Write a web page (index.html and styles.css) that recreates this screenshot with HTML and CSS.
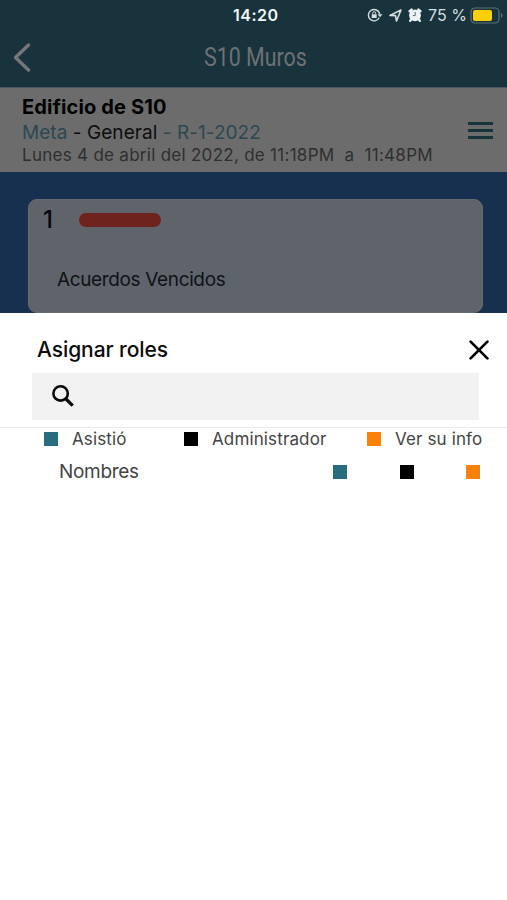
FILE: index.html
```
<!DOCTYPE html>
<html lang="es">
<head>
  <meta charset="utf-8">
  <title>S10 Muros</title>
  <link rel="stylesheet" href="styles.css">
</head>
<body>
  <div class="header">
    <div class="status-bar">
      <span class="clock">14:20</span>
      <div class="status-icons">
        <svg class="lock" width="16" height="14" viewBox="0 0 16 14">
          <path d="M12.2 9.8A5.7 5.7 0 1 1 12.7 6" fill="none" stroke="#d5dee1" stroke-width="1.4"/>
          <path d="M10.6 6.2h4.8L13 9.2z" fill="#d5dee1"/>
          <rect x="4.7" y="6.3" width="5" height="3.8" rx=".5" fill="#d5dee1"/>
          <path d="M5.7 6.5V5.2a1.5 1.5 0 0 1 3 0v1.3" fill="none" stroke="#d5dee1"/>
        </svg>
        <svg class="arrow" width="13" height="13" viewBox="0 0 13 13">
          <path d="M1 6.400L12 1 7.500 12 6.500 6.600z" fill="none" stroke="#d5dee1" stroke-width="1.600" stroke-linejoin="round"/>
        </svg>
        <svg class="alarm" width="14" height="14" viewBox="0 0 14 14">
          <circle cx="7" cy="7.3" r="5.9" fill="#eef3f4"/>
          <path d="M1.6 3.2L3.6 1.6M12.4 3.2L10.4 1.6M3.2 11.5L2.2 12.8M10.8 11.5L11.800 12.800" stroke="#eef3f4" stroke-width="2.400" stroke-linecap="round"/>
          <path d="M7.2 4v3.600H4.800" fill="none" stroke="#5b6f76" stroke-width="1"/>
        </svg>
        <span class="percent">75 %</span>
        <svg class="battery" width="33" height="17" viewBox="0 0 33 17">
          <rect x="1" y="1" width="28" height="15" rx="4" fill="none" stroke="#5f7177" stroke-width="1.2"/>
          <rect x="3" y="3" width="19" height="11" rx="2" fill="#fccf0a"/>
          <path d="M31 6v5q1.500-.8 1.500-2.500T31 6z" fill="#5f7177"/>
        </svg>
      </div>
    </div>
    <div class="nav-bar">
      <svg class="back" width="18" height="29" viewBox="0 0 18 29">
        <path d="M15.500 2L2.500 14.500 15.500 27" fill="none" stroke="#77757a" stroke-width="3.400" stroke-linecap="round" stroke-linejoin="round"/>
      </svg>
      <h1>S10 Muros</h1>
    </div>
  </div>

  <div class="meeting">
    <div class="meeting-text">
      <p class="building">Edificio de S10</p>
      <p class="goal"><span>Meta</span> - General <span>- R-1-2022</span></p>
      <p class="date">Lunes 4 de abril del 2022, de 11:18PM&nbsp; a&nbsp; 11:48PM</p>
    </div>
    <div class="menu"><i></i><i></i><i></i></div>
  </div>

  <div class="content">
    <div class="card">
      <div class="card-top">
        <span class="count">1</span>
        <span class="bar"></span>
      </div>
      <p class="card-title">Acuerdos Vencidos</p>
    </div>
  </div>

  <div class="sheet">
    <div class="sheet-header">
      <h2>Asignar roles</h2>
      <svg width="20" height="20" viewBox="0 0 20 20">
        <path d="M1.600 1.600l16.800 16.800M18.400 1.600L1.600 18.400" stroke="#000" stroke-width="2.700" stroke-linecap="round"/>
      </svg>
    </div>
    <div class="search">
      <svg width="24" height="24" viewBox="0 0 24 24">
        <circle cx="9.600" cy="9.400" r="7.200" fill="none" stroke="#0a0a0a" stroke-width="2.600"/>
        <path d="M14.500 14.500l7.200 7.200" stroke="#0a0a0a" stroke-width="3.200"/>
      </svg>
    </div>
    <div class="legend">
      <div><span class="square teal"></span>Asistió</div>
      <div><span class="square black"></span>Administrador</div>
      <div><span class="square orange"></span>Ver su info</div>
    </div>
    <div class="names">
      <span class="names-label">Nombres</span>
      <div class="names-roles">
        <span class="square teal"></span>
        <span class="square black"></span>
        <span class="square orange"></span>
      </div>
    </div>
  </div>
</body>
</html>
```
FILE: styles.css
```
* {
  box-sizing: border-box;
}

body {
  margin: 0;
  height: 900px;
  overflow: hidden;
  background-color: #fff;
  font-family: Inter, "Liberation Sans", sans-serif;
}

h1, h2, p {
  margin: 0;
  white-space: nowrap;
}

svg {
  display: block;
  flex-shrink: 0;
}

.header {
  height: 88px;
  background-color: #18333b;
  border-bottom: 1px solid #4b5b60;
}

.status-bar {
  display: flex;
  height: 30px;
  padding-left: 233px;
  line-height: 30px;
  color: #f2f8f9;
}

.clock {
  width: 134px;
  font-size: 16px;
  font-weight: 600;
  letter-spacing: 0.5px;
}

.status-icons {
  display: flex;
  align-items: center;
}

.arrow {
  margin-left: 6px;
}

.alarm {
  margin-left: 6px;
}

.percent {
  width: 42px;
  margin-left: 6px;
  font-size: 16px;
  color: #d5dee1;
  white-space: nowrap;
}

.nav-bar {
  display: flex;
  align-items: center;
  height: 55px;
  padding-left: 13px;
}

.back {
  margin-right: 173px;
}

h1 {
  font-family: Roboto, sans-serif;
  font-size: 25px;
  font-weight: 400;
  color: #6d7175;
  transform: scaleX(0.855);
  transform-origin: left;
}

.meeting {
  display: flex;
  justify-content: space-between;
  height: 84px;
  padding: 7px 14px 0 22px;
  background-color: #6c6c6c;
}

.building {
  font-size: 20px;
  font-weight: 700;
  line-height: 25px;
  letter-spacing: 0.15px;
  color: #000;
}

.goal {
  font-size: 19px;
  line-height: 25px;
  letter-spacing: 0.05px;
  color: #0c0c0c;
}

.goal span {
  color: #2b4852;
}

.date {
  font-size: 17px;
  line-height: 20px;
  letter-spacing: 0.28px;
  color: #2f2f2f;
}

.menu {
  display: flex;
  flex-direction: column;
  gap: 4px;
  padding-top: 27px;
}

.menu i {
  width: 25px;
  height: 3px;
  background-color: #18343b;
}

.content {
  height: 141px;
  padding: 27px 24px 0 28px;
  background-color: #18304f;
}

.card {
  height: 114px;
  border: 1px solid #666c6e;
  border-radius: 9px;
  background-color: #5e646a;
}

.card-top {
  display: flex;
  align-items: center;
  height: 39px;
  padding-left: 14px;
}

.count {
  width: 36px;
  font-size: 24px;
  font-weight: 500;
  color: #080a0b;
}

.bar {
  width: 82px;
  height: 14px;
  border-radius: 7px;
  background-color: #6f231e;
}

.card-title {
  padding: 29px 0 0 28px;
  font-size: 19px;
  line-height: 24px;
  letter-spacing: -0.36px;
  color: #101214;
}

.sheet {
  height: 587px;
  background-color: #fff;
}

.sheet-header {
  display: flex;
  align-items: center;
  justify-content: space-between;
  height: 60px;
  padding: 13px 18px 0 37px;
}

h2 {
  font-size: 21px;
  font-weight: 500;
  letter-spacing: -0.08px;
  color: #0c0c0c;
}

.search {
  display: flex;
  align-items: center;
  height: 47px;
  margin: 0 28px 0 32px;
  padding: 0 0 1px 19px;
  background-color: #f2f2f2;
}

.legend {
  display: grid;
  grid-template-columns: 140px 183px 1fr;
  align-items: center;
  height: 23px;
  margin-top: 7px;
  padding-left: 44px;
  border-top: 1px solid #ebebeb;
  font-size: 17px;
  line-height: 22px;
  letter-spacing: 0.13px;
  color: #444;
}

.legend div {
  display: flex;
  align-items: center;
  gap: 14px;
  white-space: nowrap;
}

.square {
  flex-shrink: 0;
  width: 14px;
  height: 14px;
}

.teal {
  background-color: #286c80;
}

.black {
  background-color: #000;
}

.orange {
  background-color: #fb820a;
}

.names {
  display: flex;
  align-items: center;
  justify-content: space-between;
  height: 43px;
  padding: 0 27px 0 59px;
  font-size: 19px;
  letter-spacing: -0.3px;
  color: #444;
}

.names-roles {
  display: flex;
  gap: 52.5px;
}
```
